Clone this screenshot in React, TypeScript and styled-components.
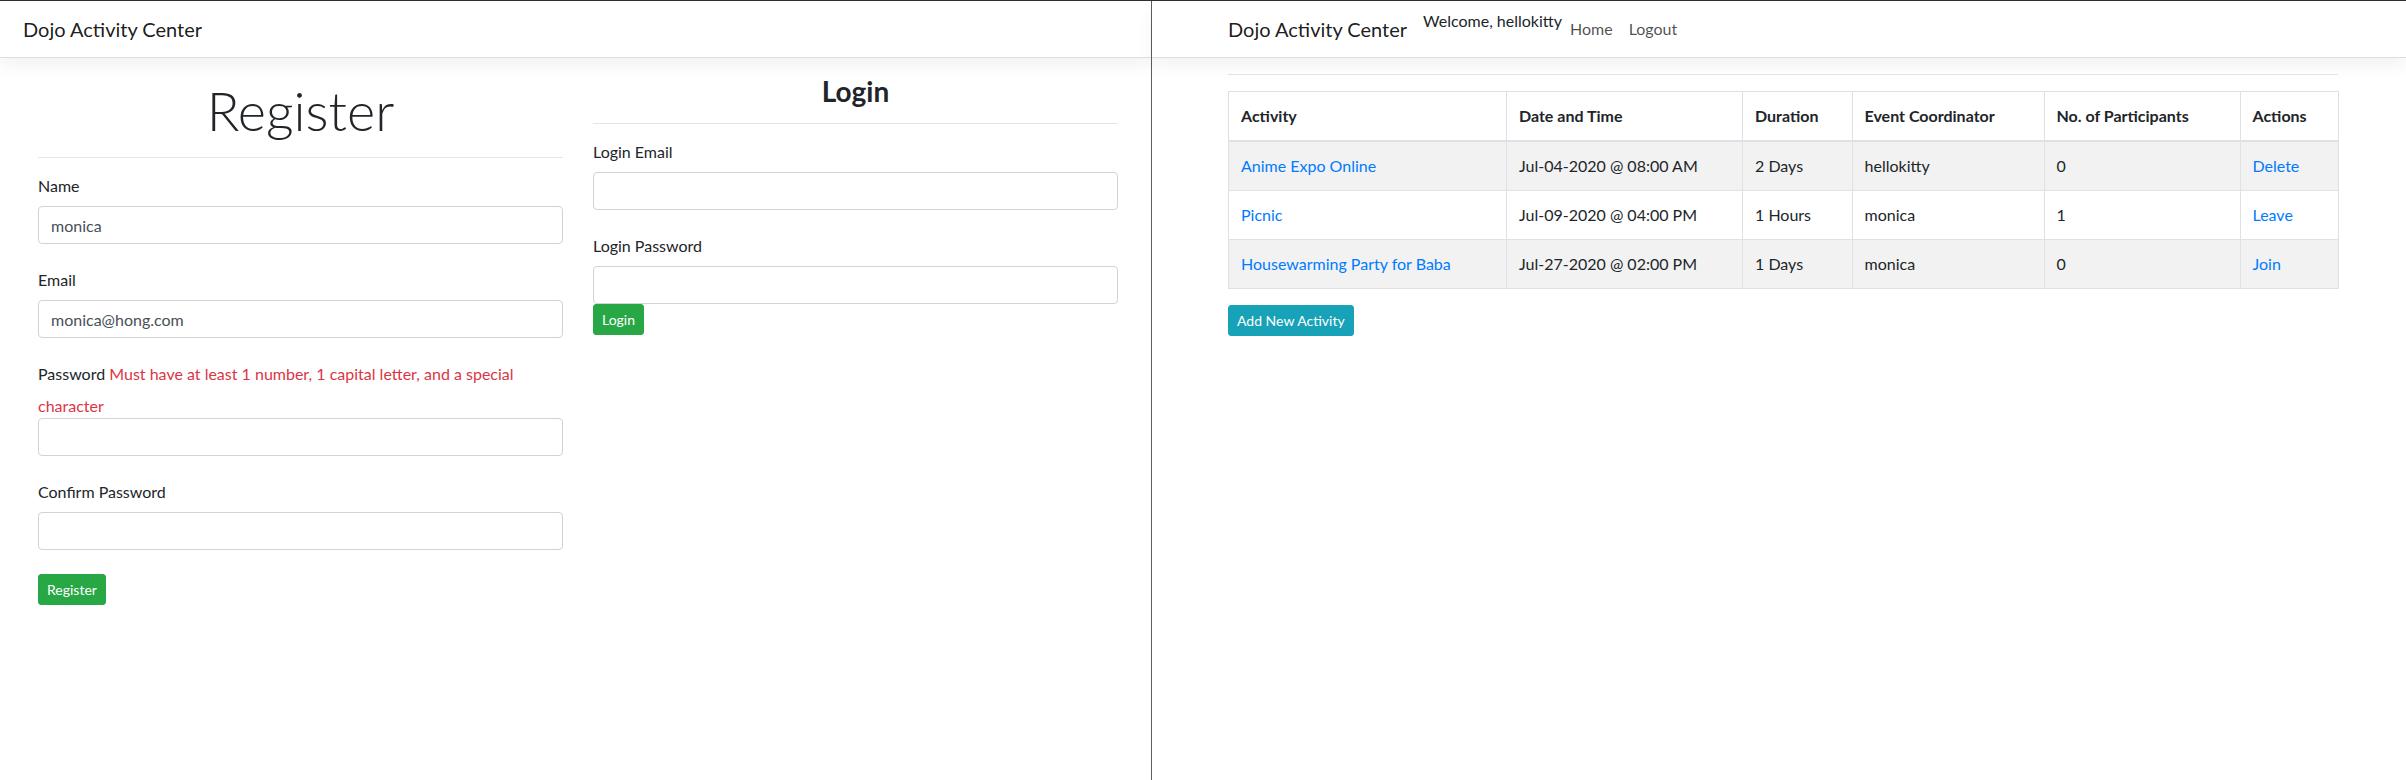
import React from "react";
import styled, { createGlobalStyle } from "styled-components";

const GlobalStyle = createGlobalStyle`
  *, *::before, *::after { box-sizing: border-box; }
  html, body { margin: 0; padding: 0; }
  body {
    font-family: "Lato", "Open Sans", "Noto Sans", sans-serif;
    font-size: 16px;
    line-height: 1.5;
    color: #212529;
    background: #ffffff;
  }
`;

const Screen = styled.div`
  display: flex;
  height: 780px;
  border-top: 1px solid #2b2f33;
  overflow: hidden;
`;

const Pane = styled.div<{ $divider?: boolean }>`
  position: relative;
  flex: ${(p) => (p.$divider ? "0 0 1152px" : "1 1 auto")};
  border-right: ${(p) => (p.$divider ? "1px solid #5e5e5e" : "none")};
  min-width: 0;
`;

const Navbar = styled.nav`
  position: relative;
  z-index: 1;
  height: 57px;
  padding: 8px 0;
  background: #ffffff;
  border-bottom: 1px solid #dedede;
  box-shadow: 0 8px 16px rgba(0, 0, 0, 0.05);
`;

const Container = styled.div<{ $offset: number }>`
  width: 1140px;
  margin-left: ${(p) => p.$offset}px;
  padding: 0 15px;
`;

const NavInner = styled(Container)`
  display: flex;
  align-items: center;
  height: 40px;
`;

const Brand = styled.a`
  display: inline-block;
  padding: 5px 0;
  margin-right: 16px;
  font-size: 20px;
  line-height: 30px;
  color: rgba(0, 0, 0, 0.9);
  text-decoration: none;
  white-space: nowrap;
`;

const Welcome = styled.p`
  margin: 0 0 16px;
  font-size: 16px;
  line-height: 24px;
  color: #212529;
  white-space: nowrap;
`;

const NavLink = styled.a`
  display: block;
  padding: 8px;
  font-size: 16px;
  line-height: 24px;
  color: rgba(0, 0, 0, 0.7);
  text-decoration: none;
`;

const TwoCols = styled.div`
  display: grid;
  grid-template-columns: 1fr 1fr;
  column-gap: 30px;
  padding: 0 15px;
`;

const Column = styled.section``;

const DisplayTitle = styled.h1`
  margin: 20px 0 0;
  font-size: 54px;
  font-weight: 300;
  line-height: 65px;
  text-align: center;
  color: #212529;
`;

const SectionTitle = styled.h3`
  margin: 17px 0 0;
  font-size: 28px;
  font-weight: 700;
  line-height: 33px;
  text-align: center;
  color: #212529;
`;

const Rule = styled.hr<{ $top: number }>`
  margin: ${(p) => p.$top}px 0 16px;
  border: 0;
  border-top: 1px solid rgba(0, 0, 0, 0.1);
  height: 0;
`;

const FormGroup = styled.div<{ $last?: boolean }>`
  margin-bottom: ${(p) => (p.$last ? 0 : 24)}px;
  line-height: 24px;
`;

const Label = styled.label`
  display: inline-block;
  margin-bottom: 8px;
  font-size: 16px;
  line-height: 24px;
`;

const ErrorText = styled.span`
  color: #dc3545;
`;

const Input = styled.input`
  display: block;
  width: 100%;
  height: 38px;
  padding: 6px 12px;
  font-family: inherit;
  font-size: 16px;
  line-height: 24px;
  color: #495057;
  background: #ffffff;
  border: 1px solid #ced4da;
  border-radius: 4px;
  outline: none;
`;

const Button = styled.button<{ $variant: "success" | "info" }>`
  display: inline-block;
  padding: 4px 8px;
  font-family: inherit;
  font-size: 14px;
  line-height: 21px;
  color: #ffffff;
  background: ${(p) => (p.$variant === "success" ? "#28a745" : "#17a2b8")};
  border: 1px solid ${(p) => (p.$variant === "success" ? "#28a745" : "#17a2b8")};
  border-radius: 3px;
  cursor: pointer;
`;

const Table = styled.table`
  width: 100%;
  margin-bottom: 16px;
  border-collapse: collapse;
  table-layout: fixed;
  border: 1px solid #dee2e6;
  color: #212529;
`;

const Th = styled.th`
  padding: 12px;
  text-align: left;
  font-weight: 700;
  line-height: 24px;
  border: 1px solid #dee2e6;
  border-bottom: 2px solid #dee2e6;
  white-space: nowrap;
`;

const Tr = styled.tr<{ $striped: boolean }>`
  background: ${(p) => (p.$striped ? "rgba(0, 0, 0, 0.05)" : "transparent")};
`;

const Td = styled.td`
  padding: 12px;
  line-height: 24px;
  border: 1px solid #dee2e6;
  white-space: nowrap;
`;

const Link = styled.a`
  color: #007bff;
  text-decoration: none;
`;

const activities = [
  { name: "Anime Expo Online", date: "Jul-04-2020 @ 08:00 AM", duration: "2 Days", coordinator: "hellokitty", participants: 0, action: "Delete" },
  { name: "Picnic", date: "Jul-09-2020 @ 04:00 PM", duration: "1 Hours", coordinator: "monica", participants: 1, action: "Leave" },
  { name: "Housewarming Party for Baba", date: "Jul-27-2020 @ 02:00 PM", duration: "1 Days", coordinator: "monica", participants: 0, action: "Join" },
];

const colWidths = [278, 236, 109.5, 192, 196, 98.5];
const headers = ["Activity", "Date and Time", "Duration", "Event Coordinator", "No. of Participants", "Actions"];

function LoginRegisterPage() {
  return (
    <Pane $divider>
      <Navbar>
        <NavInner $offset={8}>
          <Brand href="#">Dojo Activity Center</Brand>
        </NavInner>
      </Navbar>
      <Container $offset={8}>
        <TwoCols>
          <Column>
            <DisplayTitle>Register</DisplayTitle>
            <Rule $top={14} />
            <form onSubmit={(e) => e.preventDefault()}>
              <FormGroup>
                <Label>Name</Label>
                <Input type="text" defaultValue="monica" />
              </FormGroup>
              <FormGroup>
                <Label>Email</Label>
                <Input type="text" defaultValue="monica@hong.com" />
              </FormGroup>
              <FormGroup>
                <Label>Password</Label>{" "}
                <ErrorText>Must have at least 1 number, 1 capital letter, and a special character</ErrorText>
                <Input type="password" />
              </FormGroup>
              <FormGroup>
                <Label>Confirm Password</Label>
                <Input type="password" />
              </FormGroup>
              <Button $variant="success" type="submit">Register</Button>
            </form>
          </Column>
          <Column>
            <SectionTitle>Login</SectionTitle>
            <Rule $top={15} />
            <form onSubmit={(e) => e.preventDefault()}>
              <FormGroup>
                <Label>Login Email</Label>
                <Input type="text" />
              </FormGroup>
              <FormGroup $last>
                <Label>Login Password</Label>
                <Input type="password" />
              </FormGroup>
              <Button $variant="success" type="submit">Login</Button>
            </form>
          </Column>
        </TwoCols>
      </Container>
    </Pane>
  );
}

function DashboardPage() {
  return (
    <Pane>
      <Navbar>
        <NavInner $offset={61}>
          <Brand href="#">Dojo Activity Center</Brand>
          <Welcome>Welcome, hellokitty</Welcome>
          <NavLink href="#">Home</NavLink>
          <NavLink href="#">Logout</NavLink>
        </NavInner>
      </Navbar>
      <Container $offset={61}>
        <Rule $top={16} />
        <Table>
          <colgroup>
            {colWidths.map((w, i) => (
              <col key={i} style={{ width: `${w}px` }} />
            ))}
          </colgroup>
          <thead>
            <tr>
              {headers.map((h) => (
                <Th key={h}>{h}</Th>
              ))}
            </tr>
          </thead>
          <tbody>
            {activities.map((a, i) => (
              <Tr key={a.name} $striped={i % 2 === 0}>
                <Td><Link href="#">{a.name}</Link></Td>
                <Td>{a.date}</Td>
                <Td>{a.duration}</Td>
                <Td>{a.coordinator}</Td>
                <Td>{a.participants}</Td>
                <Td><Link href="#">{a.action}</Link></Td>
              </Tr>
            ))}
          </tbody>
        </Table>
        <Button $variant="info" type="button">Add New Activity</Button>
      </Container>
    </Pane>
  );
}

export default function App() {
  return (
    <>
      <GlobalStyle />
      <Screen>
        <LoginRegisterPage />
        <DashboardPage />
      </Screen>
    </>
  );
}
